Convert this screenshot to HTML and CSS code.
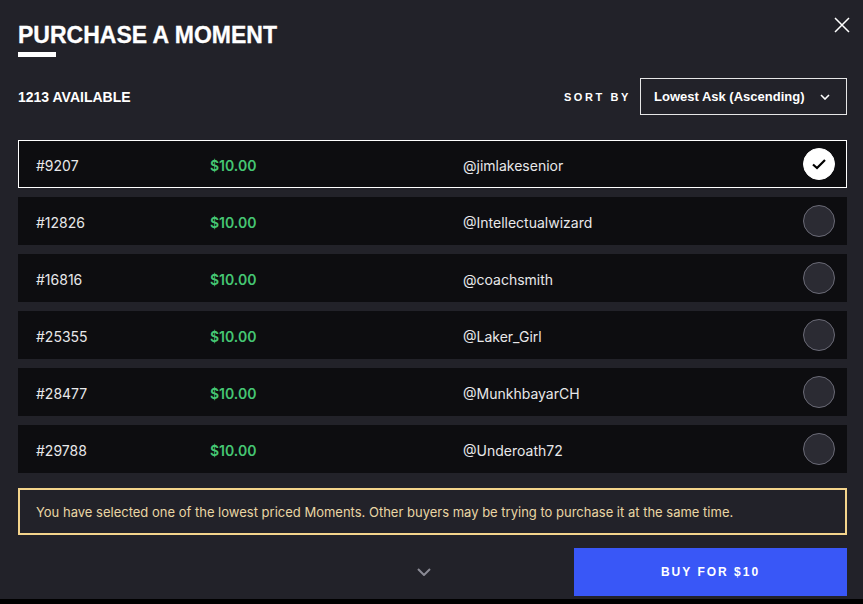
FILE: index.html
```html
<!DOCTYPE html>
<html>
  <head>
    <title>Purchase a Moment</title>
    <link rel="stylesheet" href="styles.css">
  </head>
  <body>
    <div class="modal">
      <button class="close" aria-label="Close">
        <svg width="16" height="16" viewBox="0 0 16 16">
          <path d="M1 1L15 15M15 1L1 15" stroke="#fff" stroke-width="1.5" fill="none"/>
        </svg>
      </button>

      <h1 class="title">PURCHASE A MOMENT</h1>
      <div class="title-bar"></div>

      <div class="toolbar">
        <span class="count">1213 AVAILABLE</span>
        <div class="sort">
          <span class="sort-label">SORT BY</span>
          <div class="select">
            <span>Lowest Ask (Ascending)</span>
            <svg width="10" height="6" viewBox="0 0 10 6">
              <path d="M1 1L5 5L9 1" stroke="#fff" stroke-width="1.6" fill="none"/>
            </svg>
          </div>
        </div>
      </div>

      <div class="list">
        <div class="row selected">
          <span class="serial">#9207</span>
          <span class="price">$10.00</span>
          <span class="owner">@jimlakesenior</span>
          <span class="radio">
            <svg width="16" height="12" viewBox="0 0 16 12">
              <path d="M2 6.5L6 10L14 2" stroke="#000" stroke-width="2.2" fill="none"/>
            </svg>
          </span>
        </div>
        <div class="row">
          <span class="serial">#12826</span>
          <span class="price">$10.00</span>
          <span class="owner">@Intellectualwizard</span>
          <span class="radio"></span>
        </div>
        <div class="row">
          <span class="serial">#16816</span>
          <span class="price">$10.00</span>
          <span class="owner">@coachsmith</span>
          <span class="radio"></span>
        </div>
        <div class="row">
          <span class="serial">#25355</span>
          <span class="price">$10.00</span>
          <span class="owner">@Laker_Girl</span>
          <span class="radio"></span>
        </div>
        <div class="row">
          <span class="serial">#28477</span>
          <span class="price">$10.00</span>
          <span class="owner">@MunkhbayarCH</span>
          <span class="radio"></span>
        </div>
        <div class="row">
          <span class="serial">#29788</span>
          <span class="price">$10.00</span>
          <span class="owner">@Underoath72</span>
          <span class="radio"></span>
        </div>
      </div>

      <div class="notice">
        You have selected one of the lowest priced Moments. Other buyers may be trying to purchase it at the same time.
      </div>

      <div class="footer">
        <div class="more">
          <svg width="14" height="8" viewBox="0 0 14 8">
            <path d="M1 1L7 7L13 1" stroke="#8a8a94" stroke-width="2" fill="none"/>
          </svg>
        </div>
        <button class="buy">BUY FOR $10</button>
      </div>
    </div>
  </body>
</html>
```

FILE: styles.css
```css
body {
  margin: 0;
  background-color: #000;
  font-family: "Liberation Sans", Arial, sans-serif;
  color: #e8e8ea;
}
.modal {
  position: relative;
  height: 599px;
  box-sizing: border-box;
  padding: 22px 16px 0 18px;
  background-color: #222229;
}
.close {
  position: absolute;
  top: 17px;
  right: 13px;
  padding: 0;
  border: 0;
  background: none;
  cursor: pointer;
}
.close svg {
  display: block;
}
.title {
  margin: 0;
  font-size: 23px;
  line-height: 26px;
  font-weight: bold;
  color: #fff;
  -webkit-text-stroke: 0.3px #fff;
}
.title-bar {
  width: 38px;
  height: 5px;
  margin-top: 4px;
  background-color: #fff;
}
.toolbar {
  display: flex;
  align-items: center;
  justify-content: space-between;
  margin-top: 21px;
}
.count {
  font-size: 14px;
  font-weight: bold;
  color: #fff;
}
.sort {
  display: flex;
  align-items: center;
  gap: 9px;
}
.sort-label {
  font-size: 11px;
  font-weight: bold;
  letter-spacing: 2.6px;
  color: #fff;
}
.select {
  display: flex;
  align-items: center;
  justify-content: space-between;
  width: 207px;
  height: 37px;
  box-sizing: border-box;
  padding: 0 16px 0 13px;
  border: 1px solid #e6e6e6;
  font-size: 13px;
  font-weight: bold;
  color: #fff;
}
.list {
  display: flex;
  flex-direction: column;
  gap: 9px;
  margin-top: 25px;
}
.row {
  display: grid;
  grid-template-columns: 174px 253px 1fr auto;
  align-items: center;
  height: 48px;
  box-sizing: border-box;
  padding: 2px 11px 0 17px;
  border: 1px solid #0d0d10;
  background-color: #0d0d10;
  font-family: Inter, "Liberation Sans", sans-serif;
  font-size: 14px;
}
.row.selected {
  border-color: #fff;
}
.price {
  font-weight: 600;
  color: #45c673;
}
.radio {
  display: flex;
  align-items: center;
  justify-content: center;
  width: 32px;
  height: 32px;
  margin-top: -2px;
  box-sizing: border-box;
  border: 1px solid #6a6a76;
  border-radius: 50%;
  background-color: #2b2b33;
}
.selected .radio {
  border-color: #fff;
  background-color: #fff;
}
.notice {
  margin-top: 15px;
  height: 47px;
  box-sizing: border-box;
  padding: 0 16px;
  display: flex;
  align-items: center;
  border: 2px solid #f4d48c;
  font-family: Inter, "Liberation Sans", sans-serif;
  font-size: 13px;
  color: #e9d6a4;
}
.footer {
  display: grid;
  grid-template-columns: 1fr 273px;
  margin-top: 13px;
  height: 48px;
}
.more {
  display: flex;
  align-items: center;
  justify-content: flex-end;
  padding-right: 143px;
}
.buy {
  border: 0;
  background-color: #3957f7;
  color: #fff;
  font-family: "Liberation Sans", Arial, sans-serif;
  font-size: 12px;
  font-weight: bold;
  letter-spacing: 2px;
  cursor: pointer;
}
```
